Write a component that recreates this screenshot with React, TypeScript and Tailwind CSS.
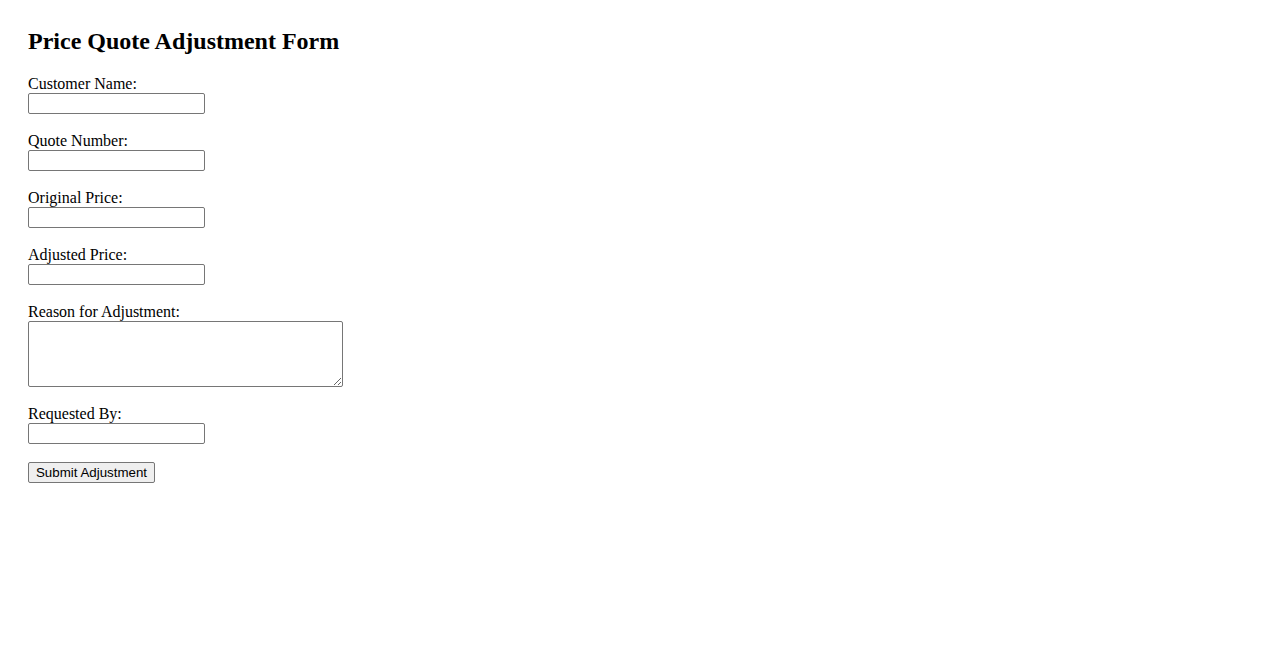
import React from 'react';

const fields = ['Customer Name:', 'Quote Number:', 'Original Price:', 'Adjusted Price:'];

const inputCls =
  'block w-[177px] h-[21px] border border-[#767676] rounded-[2px] bg-white px-[2px] text-[13.33px] font-["Liberation_Sans",sans-serif] outline-none';

const App: React.FC = () => {
  return (
    <div className="min-h-[650px] bg-white px-[28px] pt-[28px] text-black font-['Liberation_Serif',serif]">
      <h2 className="text-[24px] leading-[27px] font-bold mb-[20px]">Price Quote Adjustment Form</h2>

      <form onSubmit={(e) => e.preventDefault()}>
        {fields.map((label) => (
          <div key={label} className="mb-[18px]">
            <label className="block text-[16px] leading-[18px]">{label}</label>
            <input type="text" className={inputCls} />
          </div>
        ))}

        <div className="mb-[18px]">
          <label className="block text-[16px] leading-[18px]">Reason for Adjustment:</label>
          <textarea className="block w-[315px] h-[66px] border border-[#767676] rounded-[2px] bg-white p-[2px] text-[13.33px] font-['Liberation_Mono',monospace] outline-none" />
        </div>

        <div className="mb-[18px]">
          <label className="block text-[16px] leading-[18px]">Requested By:</label>
          <input type="text" className={inputCls} />
        </div>

        <button
          type="submit"
          className="block h-[21px] w-[127px] border border-[#767676] rounded-[2px] bg-[#efefef] text-[13.33px] leading-[15px] font-['Liberation_Sans',sans-serif] text-black"
        >
          Submit Adjustment
        </button>
      </form>
    </div>
  );
};

export default App;
